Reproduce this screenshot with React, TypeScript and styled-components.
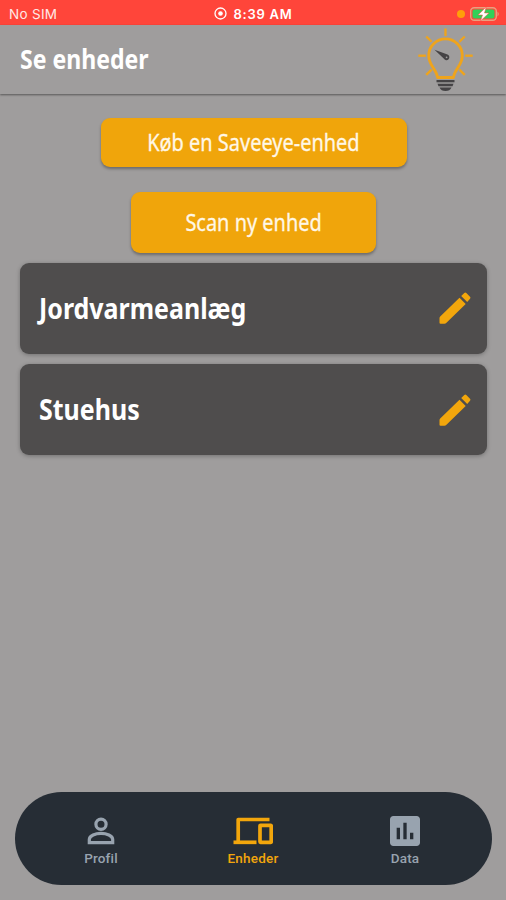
import React from "react";
import styled, { createGlobalStyle } from "styled-components";
import { MdAssessment } from "react-icons/md";

const GlobalStyle = createGlobalStyle`
  * { box-sizing: border-box; }
  body { margin: 0; background: #9f9d9d; }
  button { border: 0; font: inherit; padding: 0; }
`;

const Screen = styled.div`
  display: flex;
  flex-direction: column;
  width: 506px;
  height: 900px;
  overflow: hidden;
  background: #9f9d9d;
  color: #fff;
  font-family: "Noto Sans", "Open Sans", sans-serif;
`;

const StatusBar = styled.div`
  display: grid;
  grid-template-columns: 1fr auto 1fr;
  align-items: center;
  flex: none;
  height: 25px;
  padding: 2px 6px 0 9px;
  background: #ff453a;
  font-family: Inter, sans-serif;
  font-size: 13px;
  line-height: 16px;
`;

const Carrier = styled.span`
  font-size: 13.5px;
  letter-spacing: 0.3px;
  color: #ffe9e6;
`;

const Clock = styled.span`
  display: flex;
  align-items: center;
  gap: 6px;
  margin-right: 2px;
  font-weight: 600;
  letter-spacing: 0.75px;
`;

const PowerStatus = styled.span`
  display: flex;
  align-items: center;
  justify-content: flex-end;
  gap: 5px;
`;

const RecordingDot = styled.i`
  width: 8px;
  height: 8px;
  border-radius: 50%;
  background: #ff9f0a;
`;

const Header = styled.header`
  display: flex;
  align-items: center;
  justify-content: space-between;
  flex: none;
  height: 69px;
  padding: 0 31px 0 20px;
  box-shadow: 0 1px 2px rgba(0, 0, 0, 0.45);
`;

const Label = styled.span<{ $squeeze: number; $origin?: string }>`
  display: inline-block;
  white-space: nowrap;
  transform: scaleX(${(p) => p.$squeeze});
  transform-origin: ${(p) => p.$origin ?? "left"} center;
`;

const Title = styled.h1`
  margin: 0;
  padding-bottom: 1px;
  font-size: 26px;
  line-height: 34px;
  font-weight: 700;
`;

const Main = styled.main`
  display: flex;
  flex-direction: column;
  align-items: center;
  flex: 1;
  padding: 24px 19px 0 20px;
`;

const ActionButton = styled.button<{ $width: number; $height: number; $gap: number }>`
  display: flex;
  align-items: center;
  justify-content: center;
  flex: none;
  width: ${(p) => p.$width}px;
  height: ${(p) => p.$height}px;
  margin-bottom: ${(p) => p.$gap}px;
  padding-bottom: 1px;
  border-radius: 9px;
  background: #f0a50b;
  color: #fff7e6;
  font-size: 23px;
  -webkit-text-stroke: 0.3px #fff7e6;
  box-shadow: 0 2px 3px rgba(0, 0, 0, 0.32);
`;

const DeviceCard = styled.article`
  display: flex;
  align-items: center;
  justify-content: space-between;
  flex: none;
  width: 100%;
  height: 91px;
  margin-bottom: 10.5px;
  padding: 0 16px 0 19px;
  border-radius: 9px;
  background: #4f4d4d;
  box-shadow: 0 1px 4px rgba(0, 0, 0, 0.28);
  font-size: 28px;
  font-weight: 700;
`;

const DeviceName = styled(Label)`
  padding-bottom: 1px;
`;

const TabBar = styled.nav`
  display: grid;
  grid-template-columns: repeat(3, 152px);
  justify-content: center;
  flex: none;
  width: 477px;
  height: 93px;
  margin: 0 0 15px 15px;
  padding: 19px 1px 0 0;
  border-radius: 47px;
  background: #262d35;
`;

const Tab = styled.a<{ $active?: boolean }>`
  display: flex;
  flex-direction: column;
  align-items: center;
  color: ${(p) => (p.$active ? "#f2a60c" : "#98a3af")};
  font-family: Roboto, sans-serif;
  font-size: 13.5px;
  font-weight: 500;
  line-height: 15px;
  letter-spacing: 0.2px;

  svg {
    width: 40px;
    height: 40px;
  }
`;

const RAY_ANGLES = [-90, -45, 0, 45, 90, -135, 135];

function BulbLogo() {
  return (
    <svg width="60" height="66" viewBox="0 0 60 66" fill="none">
      <g stroke="#efa41c" strokeWidth="2.3">
        {RAY_ANGLES.map((angle) => (
          <path key={angle} d="M30.5 9V1.5" transform={`rotate(${angle} 30.5 28.700)`} />
        ))}
        <path
          strokeWidth="2.800"
          strokeLinejoin="round"
          d="M22.500 50.500C22 43 13.700 38.500 13.700 28.700A16.800 16.800 0 0 1 47.300 28.700C47.300 38.500 39 43 38.500 50.500Z"
        />
      </g>
      <path d="M19.500 22.800 32.500 27.400A3 3 0 1 1 28.700 31.600Z" fill="#454345" />
      <circle cx="31.600" cy="30.300" r="0.900" fill="#9f9d9d" />
      <g fill="#454345">
        <path d="M21.500 53H39.500V55.300H21.500Z" />
        <path d="M22.500 56.700H38.500L37.500 59.200H23.500Z" />
        <path d="M24.500 60.500H36.500C35.500 63 33.500 64 30.500 64S25.500 63 24.500 60.500Z" />
      </g>
    </svg>
  );
}

function RecordIcon() {
  return (
    <svg width="13" height="13" viewBox="0 0 13 13">
      <circle cx="6.500" cy="6.500" r="5.500" fill="none" stroke="#fff" strokeWidth="1.300" />
      <circle cx="6.500" cy="6.500" r="2.300" fill="#fff" />
    </svg>
  );
}

function BatteryIcon() {
  return (
    <svg width="30" height="14" viewBox="0 0 30 14">
      <rect x="0.700" y="0.700" width="25.600" height="12.600" rx="3.500" fill="none" stroke="#e9a080" strokeWidth="1.400" />
      <rect x="2.500" y="2.500" width="22" height="9" rx="2" fill="#30d158" />
      <path d="M27.500 4.500Q30 7 27.500 9.500Z" fill="#e9a080" />
      <path d="M16.200 0 8 8H12.500L10.500 14 19 6H14.500Z" fill="#fff" stroke="#ff453a" strokeWidth="0.500" />
    </svg>
  );
}

function PencilIcon() {
  return (
    <svg width="32" height="32" viewBox="0 0 32 32" fill="#f2a60c">
      <path d="M20.500 5.700 26.700 11.900 7.200 31Q6.500 31.700 5.500 31.700H1.500Q0.500 31.700 0.500 30.700V26.200Q0.500 25.200 1.200 24.500Z" />
      <path d="M22.200 4 25.300 0.900Q26.300 0 27.300 0.900L31 4.700Q32 5.700 31 6.700L28.200 10Z" />
    </svg>
  );
}

function PersonIcon() {
  return (
    <svg viewBox="0 0 40 40" fill="none" stroke="currentColor" strokeWidth="3.200">
      <circle cx="20" cy="13.300" r="5.100" />
      <path d="M8.300 31.700V28.500C8.300 24.600 14.500 22.400 20 22.400S31.700 24.600 31.700 28.500V31.700Z" />
    </svg>
  );
}

function DevicesIcon() {
  return (
    <svg viewBox="0 0 40 40" fill="none" stroke="currentColor" strokeWidth="3.700">
      <path strokeLinejoin="round" d="M36.500 8.500H5.200V30" />
      <path d="M0.500 31.300H23.500" />
      <rect x="27" y="14.300" width="11.200" height="17" rx="0.500" />
    </svg>
  );
}

const devices = ["Jordvarmeanlæg", "Stuehus"];

export default function App() {
  return (
    <Screen>
      <GlobalStyle />
      <StatusBar>
        <Carrier>No SIM</Carrier>
        <Clock>
          <RecordIcon />
          8:39 AM
        </Clock>
        <PowerStatus>
          <RecordingDot />
          <BatteryIcon />
        </PowerStatus>
      </StatusBar>
      <Header>
        <Title>
          <Label $squeeze={0.887}>Se enheder</Label>
        </Title>
        <BulbLogo />
      </Header>
      <Main>
        <ActionButton $width={306} $height={49} $gap={24.5}>
          <Label $squeeze={0.868} $origin="center">Køb en Saveeye-enhed</Label>
        </ActionButton>
        <ActionButton $width={245} $height={61} $gap={10}>
          <Label $squeeze={0.868} $origin="center">Scan ny enhed</Label>
        </ActionButton>
        {devices.map((name) => (
          <DeviceCard key={name}>
            <DeviceName $squeeze={0.892}>{name}</DeviceName>
            <PencilIcon />
          </DeviceCard>
        ))}
      </Main>
      <TabBar>
        <Tab>
          <PersonIcon />
          Profil
        </Tab>
        <Tab $active>
          <DevicesIcon />
          Enheder
        </Tab>
        <Tab>
          <MdAssessment />
          Data
        </Tab>
      </TabBar>
    </Screen>
  );
}
